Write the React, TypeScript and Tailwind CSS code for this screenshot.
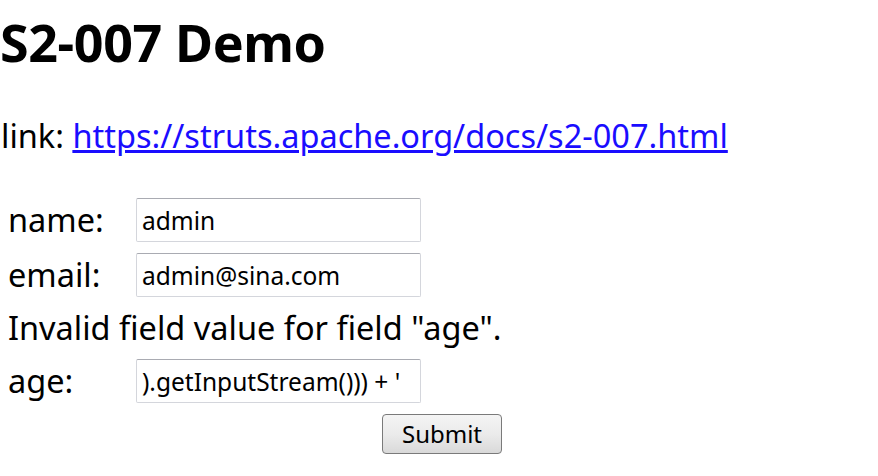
import React from 'react';

const inputCls =
  'h-[44px] w-[285px] border border-[#d4d6dc] border-t-[#a9abb2] rounded-[2px] pl-[5px] pr-[4px] text-[24.5px] outline-none bg-white';

const App = () => {
  return (
    <div className="w-[878px] h-[476px] bg-white text-black overflow-hidden font-['Noto_Sans',sans-serif]">
      <h1 className="text-[52px] font-bold leading-[64px] pt-[10px] tracking-[-0.4px]">S2-007 Demo</h1>

      <p className="mt-[42px] text-[32.5px] leading-[40px] pl-[1px]">
        link:{' '}
        <a href="https://struts.apache.org/docs/s2-007.html" className="text-[#1a0dff] underline">
          https://struts.apache.org/docs/s2-007.html
        </a>
      </p>

      <form className="mt-[42px] pl-[8px] text-[32.5px] leading-[40px] w-[502px] flex flex-col gap-[11px]">
        <div className="flex items-center">
          <label className="w-[128px]">name:</label>
          <input readOnly value="admin" className={inputCls} />
        </div>
        <div className="flex items-center">
          <label className="w-[128px]">email:</label>
          <input readOnly value="admin@sina.com" className={inputCls} />
        </div>
        <div className="whitespace-nowrap">Invalid field value for field "age".</div>
        <div className="flex items-center">
          <label className="w-[128px]">age:</label>
          <input readOnly value={').getInputStream())) + \''} className={inputCls} />
        </div>
        <div className="flex justify-end">
          <button
            type="button"
            className="h-[40px] w-[120px] border border-[#7a7a7a] rounded-[4px] bg-gradient-to-b from-[#f4f4f4] via-[#ebebeb] to-[#d9d9d9] text-[24px] leading-none text-black"
          >
            Submit
          </button>
        </div>
      </form>
    </div>
  );
};

export default App;
